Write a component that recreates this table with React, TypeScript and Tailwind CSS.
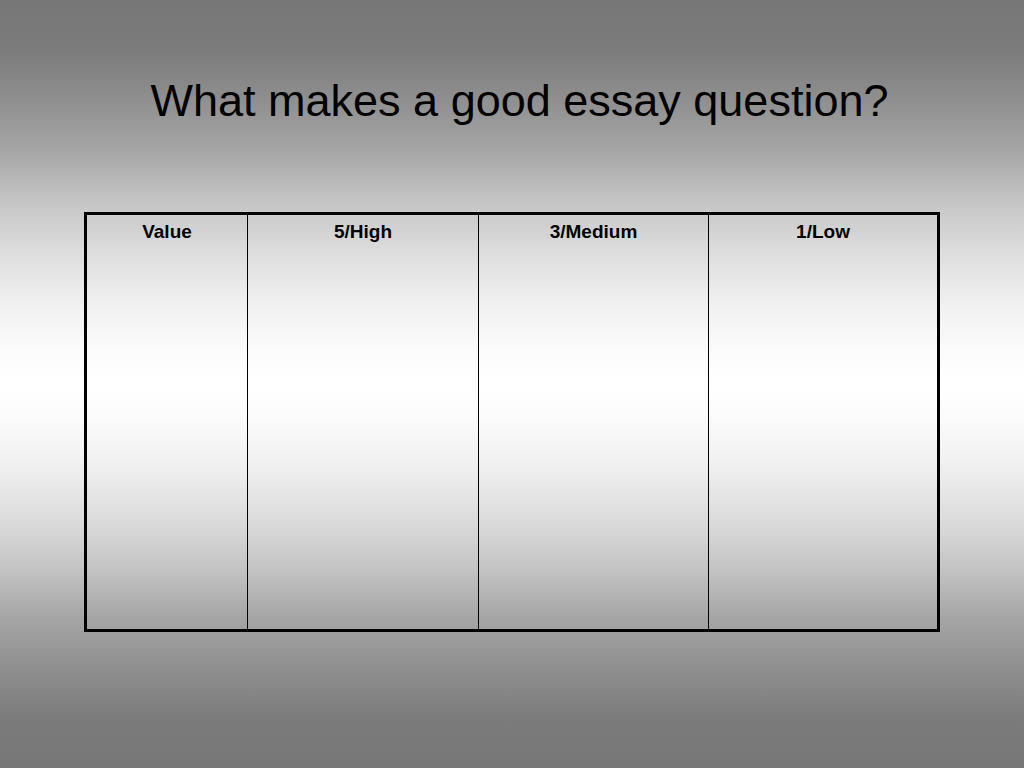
export default function App() {
  const cols = [
    { label: 'Value', w: 'w-[160px]' },
    { label: '5/High', w: 'w-[231px]' },
    { label: '3/Medium', w: 'w-[230px]' },
    { label: '1/Low', w: 'flex-1' },
  ];

  return (
    <div className="w-[1024px] h-[768px] overflow-hidden bg-[linear-gradient(to_bottom,#777777_0%,#7b7b7b_6.5%,#8f8f8f_13%,#a5a5a5_19.5%,#c4c4c4_26%,#dcdcdc_32.5%,#efefef_39%,#fbfbfb_45.5%,#ffffff_50%,#fbfbfb_54.5%,#efefef_61%,#dcdcdc_67.5%,#c4c4c4_74%,#a5a5a5_80.5%,#8f8f8f_87%,#7b7b7b_93.5%,#777777_100%)] font-['Liberation_Sans',Arial,sans-serif] text-black">
      {/* Title */}
      <h1 className="pt-[78px] pl-[15px] text-center text-[45px] leading-none font-normal">
        What makes a good essay question?
      </h1>

      {/* Rubric table */}
      <div className="mx-[84px] mt-[89px] h-[420px] border-[3px] border-black flex">
        {cols.map((c, i) => (
          <div
            key={c.label}
            className={`${c.w} shrink-0 h-full pt-[7px] text-center text-[19px] leading-none font-bold ${i > 0 ? 'border-l border-black' : ''}`}
          >
            {c.label}
          </div>
        ))}
      </div>
    </div>
  );
}
